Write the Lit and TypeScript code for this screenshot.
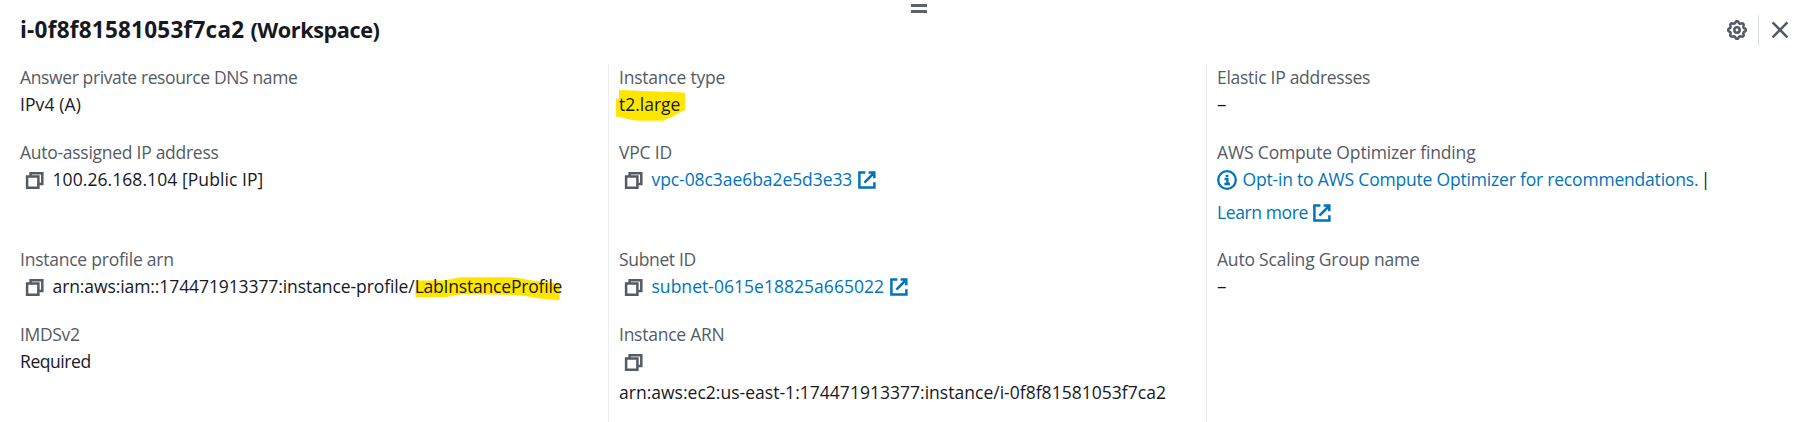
import { LitElement, html, css, svg, nothing, TemplateResult } from "lit";
import { styleMap } from "lit/directives/style-map.js";

const text = (value: string, tracking: number, cls = "") =>
  html`<span class="text ${cls}" style=${styleMap({ letterSpacing: `${tracking}px` })}>${value}</span>`;

const copyIcon = html`<svg class="icon copy" width="20" height="20" viewBox="0 0 20 20">
  <path d="M5.6 5.3V2.3H17.3V13H14.2" /><path d="M2.1 5.4H13.4V16.8H2.1Z" />
</svg>`;

const externalIcon = html`<svg class="icon external" width="18" height="18" viewBox="0 0 18 18">
  <path d="M7.4 1.6H1.4V16.5H16.4V11.2" /><path d="M10.6 1.6H16.3V7.2M16 2L6.4 11.6" />
</svg>`;

const infoIcon = html`<svg class="icon info" width="20" height="20" viewBox="0 0 20 20">
  <circle cx="10" cy="10" r="8.8" /><path d="M7.6 9H10.4V13.9M7.4 14H13" /><path class="solid" d="M8.7 4.8H11.4V7.1H8.7Z" />
</svg>`;

// Eight-lobed cog outline, sampled around the circle.
const gearPath = (() => {
  const points: string[] = [];
  for (let i = 0; i < 96; i++) {
    const a = (i / 96) * Math.PI * 2;
    const wave = Math.max(-0.75, Math.min(0.75, Math.cos(8 * a) * 1.1));
    const r = 7.9 + wave * 1.1;
    points.push(`${(10 + r * Math.cos(a)).toFixed(2)} ${(10 + r * Math.sin(a)).toFixed(2)}`);
  }
  return `M${points.join("L")}Z`;
})();

const highlight = (cls: string, width: number, height: number, d: string) =>
  html`<svg class="marker ${cls}" width=${width} height=${height} viewBox="0 0 ${width} ${height}">${svg`<path d=${d} />`}</svg>`;

interface Field {
  label: string;
  tracking: number;
  value?: TemplateResult;
}

const columns: Field[][] = [
  [
    { label: "Answer private resource DNS name", tracking: -0.379, value: html`<div class="line">${text("IPv4 (A)", 0.1)}</div>` },
    {
      label: "Auto-assigned IP address",
      tracking: -0.272,
      value: html`<div class="line">${copyIcon}${text("100.26.168.104 [Public IP]", 0.069)}</div>`,
    },
    {
      label: "Instance profile arn",
      tracking: -0.24,
      value: html`<div class="line">${copyIcon}${text("arn:aws:iam::174471913377:instance-profile/", -0.09)}<span class="marked">${highlight(
        "wide", 146, 24,
        "M0.5 3.6L27 3.4C35 3 40 0.5 47 0.3L96 0.2C106 0.5 112 3.4 124 4.2L143 6.2L145 9L144.6 23C128 22.6 116 20 106 18.5C85 17.4 60 17.2 46 17.6C38 18.2 36 20 28 20.3H0.5Z"
      )}${text("LabInstanceProfile", -0.2)}</span></div>`,
    },
    { label: "IMDSv2", tracking: -0.333, value: html`<div class="line">${text("Required", -0.423)}</div>` },
  ],
  [
    {
      label: "Instance type",
      tracking: -0.22,
      value: html`<div class="line"><span class="marked">${highlight(
        "box", 69, 31,
        "M3 0L18 0.4C28 1.6 48 1 69 2.7V20C61 24 56 27 48 30.4C38 31 24 30.8 18 30.2C10 29 5 27 0 26.5V8.7H3Z"
      )}${text("t2.large", -0.02)}</span></div>`,
    },
    {
      label: "VPC ID",
      tracking: -0.183,
      value: html`<div class="line">${copyIcon}${text("vpc-08c3ae6ba2e5d3e33", -0.07, "link")}${externalIcon}</div>`,
    },
    {
      label: "Subnet ID",
      tracking: -0.346,
      value: html`<div class="line">${copyIcon}${text("subnet-0615e18825a665022", 0.03, "link")}${externalIcon}</div>`,
    },
    {
      label: "Instance ARN",
      tracking: -0.252,
      value: html`<div class="line tall">${copyIcon}</div>
        <div class="line">${text("arn:aws:ec2:us-east-1:174471913377:instance/i-0f8f81581053f7ca2", 0.02)}</div>`,
    },
  ],
  [
    { label: "Elastic IP addresses", tracking: -0.283, value: html`<div class="line">${text("–", 0, "dash")}</div>` },
    {
      label: "AWS Compute Optimizer finding",
      tracking: -0.15,
      value: html`<div class="line advice">${infoIcon}${text("Opt-in to AWS Compute Optimizer for recommendations.", -0.195, "link")}<span class="bar">|</span></div>
        <div class="line">${text("Learn more", -0.388, "link")}<span class="snug">${externalIcon}</span></div>`,
    },
    { label: "Auto Scaling Group name", tracking: -0.203, value: html`<div class="line">${text("–", 0, "dash")}</div>` },
  ],
];

class AppRoot extends LitElement {
  static styles = css`
    :host {
      display: block;
      height: 422px;
      overflow: hidden;
      position: relative;
      background: #fff;
      color: #16191f;
      font: 17.5px/27.5px "Open Sans", "Noto Sans", sans-serif;
    }
    .panel { display: flex; flex-direction: column; height: 100%; }
    .handle {
      position: absolute;
      left: 911px;
      top: 4px;
      width: 16px;
      height: 3px;
      border-top: 3px solid #5b626e;
      border-bottom: 3px solid #5b626e;
    }
    header { display: flex; align-items: flex-start; height: 64px; box-sizing: border-box; padding: 15px 28.5px 0 20px; }
    h2 { flex: 1; margin: 0; padding-top: 1px; font-size: 22.5px; line-height: 27.5px; font-weight: 700; letter-spacing: 0.24px; }
    .name { font-size: 21.7px; letter-spacing: -0.45px; }
    .actions { display: flex; align-items: center; height: 30px; }
    .actions svg { display: block; fill: none; stroke: #545b64; stroke-width: 2.5; }
    .rule { width: 1px; height: 30px; background: #d9dfdf; margin: 0 12px 0 11px; }
    .columns { flex: 1; display: grid; grid-template-columns: 608px 598px 1fr; min-height: 0; }
    .column { display: grid; grid-template-rows: 75px 107px 75px 101px; height: 358px; box-sizing: border-box; padding-left: 10px; border-left: 1px solid #eaeded; }
    .column:first-child { padding-left: 20px; border-left: 0; }
    .label { color: #545b64; height: 27px; }
    .text { white-space: pre; }
    .line { display: flex; align-items: center; height: 27.5px; white-space: nowrap; }
    .line.tall { margin-bottom: 3px; }
    .line.advice { margin-bottom: 5.3px; }
    .link { color: #0073bb; }
    .dash { font-size: 19px; }
    .bar { margin-left: 2.5px; }
    .icon { flex: none; fill: none; stroke-width: 2.5; }
    .copy { stroke: #545b64; margin: 2px 7.5px 0 5px; }
    .external { display: block; stroke: #0073bb; margin: 0 0 0 6px; }
    .snug { margin-left: -0.5px; }
    .info { stroke: #0073bb; margin: 1px 5.5px 0 0; stroke-width: 2.3; }
    .solid { fill: #0073bb; stroke: none; }
    .marked { position: relative; }
    .marked .text { position: relative; }
    .marker { position: absolute; fill: #ffe600; }
    .wide { left: 0; top: 3.5px; }
    .box { left: -3px; top: -1px; }
  `;

  render() {
    return html`
      <section class="panel">
        <div class="handle"></div>
        <header>
          <h2>i-0f8f81581053f7ca2 <span class="name">(Workspace)</span></h2>
          <div class="actions">
            <svg width="20" height="20" viewBox="0 0 20 20"><path d=${gearPath} /><circle cx="10" cy="10" r="2.7" /></svg>
            <div class="rule"></div>
            <svg width="18" height="18" viewBox="0 0 18 18"><path d="M1.6 1.4L16.4 16.4M16.4 1.4L1.6 16.4" /></svg>
          </div>
        </header>
        <div class="columns">
          ${columns.map(
            (fields) => html`<div class="column">
              ${fields.map(
                (f) => html`<div class="field"><div class="label">${text(f.label, f.tracking)}</div>${f.value ?? nothing}</div>`
              )}
            </div>`
          )}
        </div>
      </section>
    `;
  }
}
customElements.define("app-root", AppRoot);
